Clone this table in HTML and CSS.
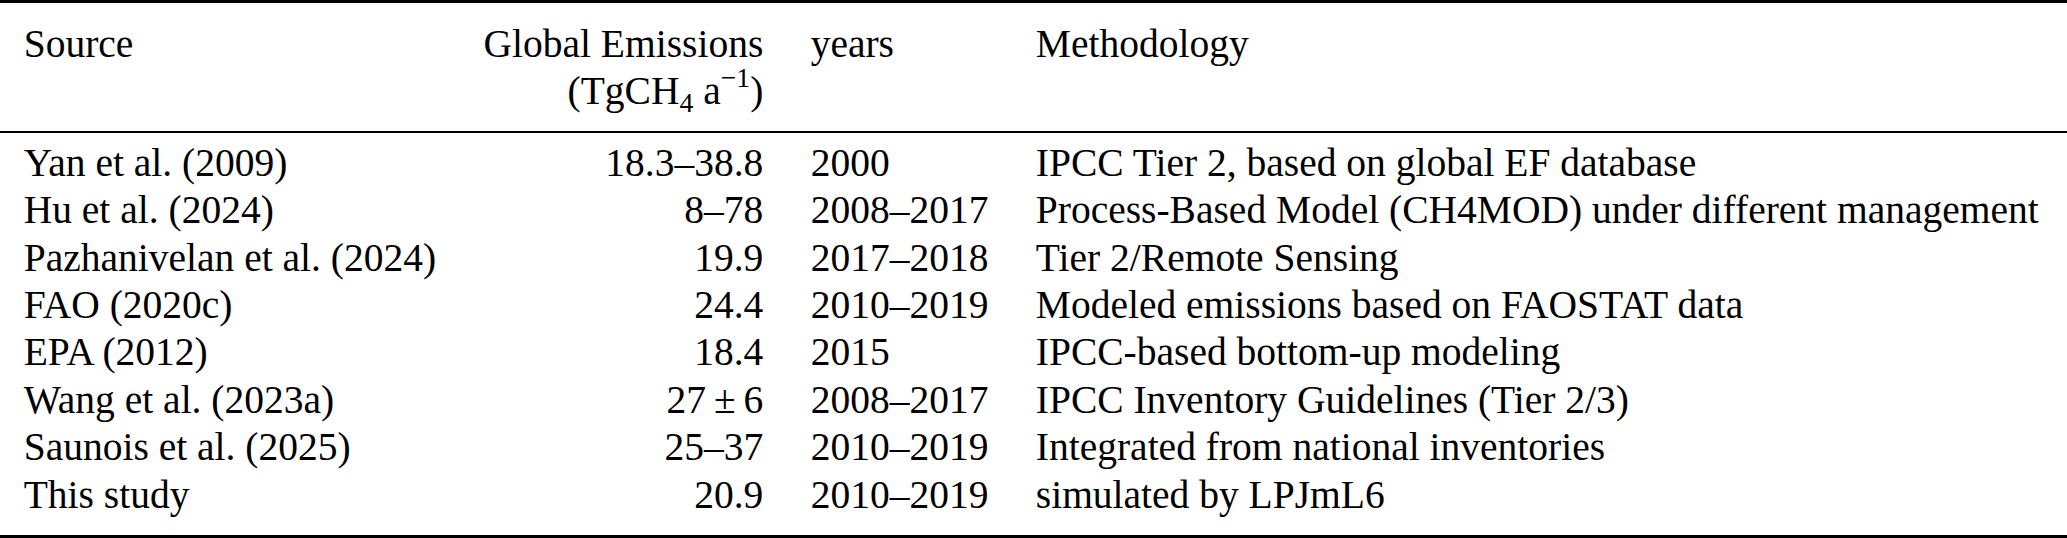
FILE: index.html
```html
<!DOCTYPE html>
<html lang="en">
<head>
<meta charset="utf-8">
<title>Global rice methane emission estimates</title>
<link rel="stylesheet" href="styles.css">
</head>
<body>
<table class="tbl">
  <thead>
    <tr>
      <th class="src">Source</th>
      <th class="num">Global Emissions<br>(TgCH<sub class="sb">4</sub> a<sup class="sp">&#8722;1</sup>)</th>
      <th class="yr">years</th>
      <th class="meth">Methodology</th>
    </tr>
  </thead>
  <tbody>
    <tr><td class="src">Yan et al. (2009)</td><td class="num">18.3–38.8</td><td class="yr">2000</td><td class="meth">IPCC Tier 2, based on global EF database</td></tr>
    <tr><td class="src">Hu et al. (2024)</td><td class="num">8–78</td><td class="yr">2008–2017</td><td class="meth">Process-Based Model (CH4MOD) under different management</td></tr>
    <tr><td class="src">Pazhanivelan et al. (2024)</td><td class="num">19.9</td><td class="yr">2017–2018</td><td class="meth">Tier 2/Remote Sensing</td></tr>
    <tr><td class="src">FAO (2020c)</td><td class="num">24.4</td><td class="yr">2010–2019</td><td class="meth">Modeled emissions based on FAOSTAT data</td></tr>
    <tr><td class="src">EPA (2012)</td><td class="num">18.4</td><td class="yr">2015</td><td class="meth">IPCC-based bottom-up modeling</td></tr>
    <tr><td class="src">Wang et al. (2023a)</td><td class="num">27&#8201;±&#8201;6</td><td class="yr">2008–2017</td><td class="meth">IPCC Inventory Guidelines (Tier 2/3)</td></tr>
    <tr><td class="src">Saunois et al. (2025)</td><td class="num">25–37</td><td class="yr">2010–2019</td><td class="meth">Integrated from national inventories</td></tr>
    <tr><td class="src">This study</td><td class="num">20.9</td><td class="yr">2010–2019</td><td class="meth">simulated by LPJmL6</td></tr>
  </tbody>
</table>
</body>
</html>
```

FILE: styles.css
```css
html, body {
  margin: 0;
  padding: 0;
  background: #fff;
}
body {
  width: 2067px;
  height: 538px;
  overflow: hidden;
}
.tbl {
  border-collapse: collapse;
  width: 2067px;
  font-family: "Liberation Serif", "Times New Roman", serif;
  font-size: 39.5px;
  line-height: 1.2;
  color: #000;
}
.tbl th,
.tbl td {
  padding: 0 0.6em;
  white-space: nowrap;
  font-weight: normal;
  vertical-align: top;
  text-align: left;
}
.tbl thead tr {
  border-top: 3px solid #000;
  border-bottom: 2px solid #000;
}
.tbl thead th {
  padding-top: 18px;
  padding-bottom: 15px;
}
.tbl tbody tr:first-child td {
  padding-top: 7px;
}
.tbl tbody tr:last-child {
  border-bottom: 3px solid #000;
}
.tbl tbody tr:last-child td {
  padding-bottom: 16px;
}
.tbl .num {
  text-align: right;
}
.tbl .meth {
  width: 100%;
}
.sb {
  font-size: 0.7em;
  vertical-align: -0.3em;
  line-height: 0;
}
.sp {
  font-size: 0.7em;
  vertical-align: 0.62em;
  line-height: 0;
}
```
